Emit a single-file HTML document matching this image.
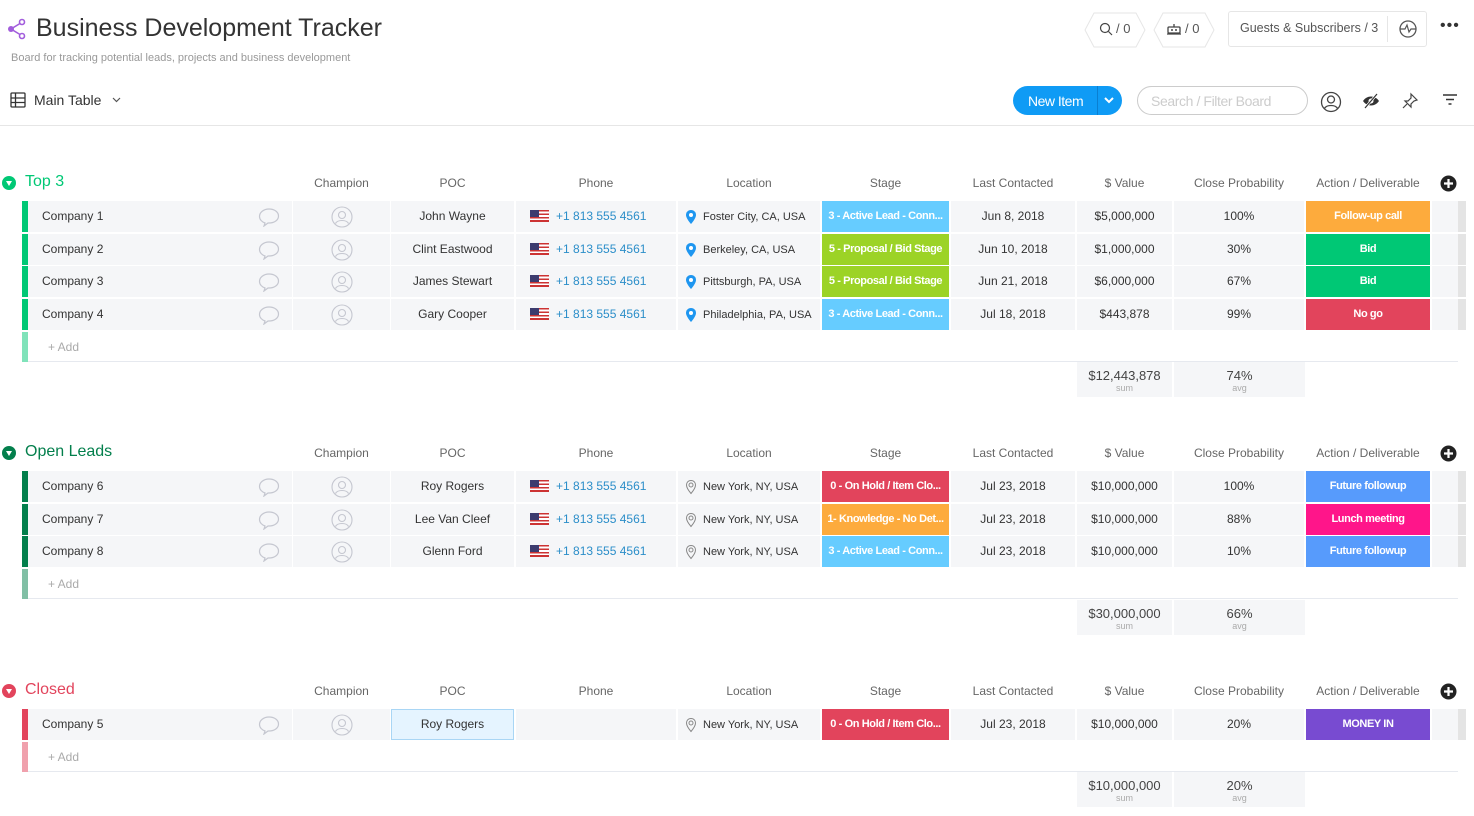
<!DOCTYPE html>
<html><head><meta charset="utf-8"><style>
*{margin:0;padding:0;box-sizing:border-box}
body{width:1474px;height:816px;background:#fff;font-family:"Liberation Sans",sans-serif;color:#333;position:relative;overflow:hidden}
.a{position:absolute}
.r{position:absolute;left:0;width:1474px;height:31px}
.r>div{position:absolute;top:0;height:31px;line-height:31px;font-size:12px;text-align:center;background:#f5f6f8;white-space:nowrap;overflow:hidden}
.bar{left:22px;width:6px}
.nm{left:28px;width:264px;text-align:left!important;padding-left:14px}
.ch{left:293px;width:97px}.poc{left:391px;width:123px}
.ph{left:516px;width:160px;text-align:left!important;padding-left:14px}
.lo{left:678px;width:142px;text-align:left!important;padding-left:7px}
.lo span{font-size:11px}
.st{left:822px;width:127px;color:#fff!important;font-weight:bold;font-size:11px!important;letter-spacing:-0.4px}
.lc{left:951px;width:124px}.va{left:1077px;width:95px}.pr{left:1174px;width:130px}
.ac{left:1306px;width:124px;color:#fff;font-weight:bold;font-size:11px!important;letter-spacing:-0.4px}
.ex{left:1432px;width:26px}.sc{left:1458px;width:8px;background:#e4e4e4!important}
.hd{position:absolute;font-size:12px;color:#666;text-align:center}
.gt{position:absolute;left:25px;font-size:16px}
.circ{position:absolute;left:2px;width:14px;height:14px;border-radius:50%}
.circ:after{content:"";position:absolute;left:3.5px;top:4.5px;border-left:3.5px solid transparent;border-right:3.5px solid transparent;border-top:5px solid #fff}
.flag{display:inline-block;width:19px;height:12px;vertical-align:-2px;margin-right:7px;background:repeating-linear-gradient(#c33 0 1.7px,#fff 1.7px 3.4px);position:relative}
.flag:before{content:"";position:absolute;left:0;top:0;width:9px;height:7px;background:#3c3b6e}
.phn{color:#2b8ec9}
.sum{position:absolute;background:#f5f6f8;text-align:center;font-size:13px;color:#444;line-height:14px;padding-top:7px;height:35px}
.sum span{display:block;font-size:9px;color:#aaa;line-height:10px}
.add{position:absolute;left:22px;width:1436px;height:30px;border-bottom:1px solid #e6e9ef;font-size:12px;color:#aaa;line-height:30px;padding-left:26px}
.add i{position:absolute;left:0;top:0;width:6px;height:30px}
svg{vertical-align:middle}
</style></head><body>

<svg class="a" style="left:7px;top:18px" width="20" height="22" viewBox="0 0 20 22"><g fill="none" stroke="#a25ddc" stroke-width="1.6"><circle cx="15" cy="4" r="2.5"/><circle cx="15" cy="18" r="2.5"/><path d="M13 5.5 L4 11 L13 16.5"/></g><circle cx="4" cy="11" r="3" fill="#a25ddc"/></svg>
<div class="a" style="left:36px;top:14px;font-size:25px;color:#333">Business Development Tracker</div>
<div class="a" style="left:11px;top:52px;font-size:11px;color:#999">Board for tracking potential leads, projects and business development</div>

<svg class="a" style="left:1084px;top:12px" width="62" height="36"><path d="M10 1H52L61 18 52 35H10L1 18Z" fill="#fff" stroke="#e6e6e6"/></svg>
<svg class="a" style="left:1098px;top:21px" width="16" height="16"><g fill="none" stroke="#444" stroke-width="1.2"><circle cx="7" cy="7" r="4.5"/><path d="M10.5 10.5L14 14"/></g></svg>
<div class="a" style="left:1116px;top:21px;font-size:13px;color:#555">/ 0</div>
<svg class="a" style="left:1153px;top:12px" width="62" height="36"><path d="M10 1H52L61 18 52 35H10L1 18Z" fill="#fff" stroke="#e6e6e6"/></svg>
<svg class="a" style="left:1166px;top:22px" width="16" height="14"><g fill="none" stroke="#444" stroke-width="1.3"><rect x="2" y="5" width="12" height="6" rx="1"/><path d="M8 5V2M1 12h14"/></g><circle cx="6" cy="8" r="1" fill="#444"/><circle cx="10" cy="8" r="1" fill="#444"/></svg>
<div class="a" style="left:1185px;top:21px;font-size:13px;color:#555">/ 0</div>
<div class="a" style="left:1228px;top:11px;width:199px;height:36px;border:1px solid #e6e6e6;border-radius:3px"></div>
<div class="a" style="left:1240px;top:21px;font-size:12.5px;color:#555">Guests &amp; Subscribers / 3</div>
<div class="a" style="left:1387px;top:16px;width:1px;height:26px;background:#e6e6e6"></div>
<svg class="a" style="left:1398px;top:19px" width="20" height="20"><circle cx="10" cy="10" r="8" fill="none" stroke="#555" stroke-width="1.3"/><path d="M2 10h5l2-4 2 7 2-3h5" fill="none" stroke="#555" stroke-width="1.2"/></svg>
<div class="a" style="left:1440px;top:17px;font-size:16px;color:#333;letter-spacing:1px">•••</div>

<svg class="a" style="left:10px;top:92px" width="16" height="16"><g fill="none" stroke="#333" stroke-width="1.3"><rect x="1" y="1" width="14" height="14" rx="1"/><path d="M1 6h14M1 10.5h14M5.5 1v14"/></g></svg>
<div class="a" style="left:34px;top:92px;font-size:14px;color:#333">Main Table</div>
<svg class="a" style="left:112px;top:97px" width="9" height="6"><path d="M1 1l3.5 3.5L8 1" fill="none" stroke="#555" stroke-width="1.2"/></svg>

<div class="a" style="left:1013px;top:86px;width:109px;height:29px;border-radius:15px;background:#0f9bf5"></div>
<div class="a" style="left:1028px;top:93px;font-size:14px;color:#fff;letter-spacing:-0.5px">New Item</div>
<div class="a" style="left:1097px;top:86px;width:1px;height:29px;background:#0a7fd1"></div>
<svg class="a" style="left:1104px;top:96px" width="10" height="8"><path d="M1 2l4 4 4-4" fill="none" stroke="#fff" stroke-width="2"/></svg>
<div class="a" style="left:1137px;top:86px;width:171px;height:29px;border:1px solid #ccc;border-radius:15px"></div>
<div class="a" style="left:1151px;top:93px;font-size:14px;color:#ccc;letter-spacing:-0.4px">Search / Filter Board</div>
<svg class="a" style="left:1320px;top:91px" width="22" height="22"><g fill="none" stroke="#444" stroke-width="1.3"><circle cx="11" cy="11" r="9.5"/><circle cx="11" cy="8.5" r="3.5"/><path d="M4.5 17.5c2-4 11-4 13 0"/></g></svg>
<svg class="a" style="left:1362px;top:93px" width="18" height="16"><path d="M1 8c4-6 12-6 16 0c-4 6-12 6-16 0z" fill="#333"/><circle cx="9" cy="8" r="2.5" fill="#fff"/><path d="M3 15L15 1" stroke="#fff" stroke-width="2.5"/><path d="M3 15L15 1" stroke="#333" stroke-width="1.2"/></svg>
<svg class="a" style="left:1401px;top:92px" width="18" height="18"><g fill="none" stroke="#444" stroke-width="1.2"><path d="M10 2l6 6-3 1-3 3 0 3-6-6 3 0 3-3z"/><path d="M6 12l-4 4"/></g></svg>
<svg class="a" style="left:1442px;top:94px" width="16" height="12"><path d="M1 1h14M4 5.5h8M6.5 10h3" stroke="#333" stroke-width="1.6"/></svg>
<div class="a" style="left:0;top:125px;width:1474px;height:1px;background:#e6e6e6"></div>

<!-- Group 1 -->
<div class="circ" style="top:176px;background:#00c875"></div>
<div class="gt" style="top:173px;color:#00c875">Top 3</div>
<div class="hd" style="left:293px;width:97px;top:176px">Champion</div><div class="hd" style="left:391px;width:123px;top:176px">POC</div><div class="hd" style="left:516px;width:160px;top:176px">Phone</div><div class="hd" style="left:678px;width:142px;top:176px">Location</div><div class="hd" style="left:822px;width:127px;top:176px">Stage</div><div class="hd" style="left:951px;width:124px;top:176px">Last Contacted</div><div class="hd" style="left:1077px;width:95px;top:176px">$ Value</div><div class="hd" style="left:1174px;width:130px;top:176px">Close Probability</div><div class="hd" style="left:1306px;width:124px;top:176px">Action / Deliverable</div>
<svg class="a" style="left:1440px;top:175px" width="17" height="17"><circle cx="8.5" cy="8.5" r="8" fill="#222"/><path d="M8.5 4v9M4 8.5h9" stroke="#fff" stroke-width="2.2"/></svg>

<div class="r" style="top:201px"><div class="bar" style="background:#00c875"></div><div class="nm">Company 1<svg style="position:absolute;left:230px;top:6px" width="22" height="20"><path d="M11 2C5.5 2 1.5 5.5 1.5 9.5c0 3 2.5 5.5 5.5 6.5L6 19l4-3h1c5.5 0 9.5-3 9.5-7S16.5 2 11 2z" fill="none" stroke="#c5c7d0" stroke-width="1.2"/></svg></div><div class="ch"><svg width="22" height="22"><g fill="none" stroke="#c5c7d0" stroke-width="1.1"><circle cx="11" cy="11" r="10"/><circle cx="11" cy="9" r="3.5"/><path d="M4.5 17.5c2-4 11-4 13 0"/></g></svg></div><div class="poc">John Wayne</div><div class="ph"><span class="flag"></span><span class="phn">+1 813 555 4561</span></div><div class="lo"><svg width="12" height="16" style="margin-right:6px"><path d="M6 1C3 1 1 3.2 1 6c0 3.5 5 9 5 9s5-5.5 5-9C11 3.2 9 1 6 1z" fill="#1e96f0"/><circle cx="6" cy="6" r="2" fill="#fff"/></svg><span>Foster City, CA, USA</span></div><div class="st" style="background:#66ccff">3 - Active Lead - Conn...</div><div class="lc">Jun 8, 2018</div><div class="va">$5,000,000</div><div class="pr">100%</div><div class="ac" style="background:#fdab3d">Follow-up call</div><div class="ex"></div><div class="sc"></div></div>
<div class="r" style="top:234px"><div class="bar" style="background:#00c875"></div><div class="nm">Company 2<svg style="position:absolute;left:230px;top:6px" width="22" height="20"><path d="M11 2C5.5 2 1.5 5.5 1.5 9.5c0 3 2.5 5.5 5.5 6.5L6 19l4-3h1c5.5 0 9.5-3 9.5-7S16.5 2 11 2z" fill="none" stroke="#c5c7d0" stroke-width="1.2"/></svg></div><div class="ch"><svg width="22" height="22"><g fill="none" stroke="#c5c7d0" stroke-width="1.1"><circle cx="11" cy="11" r="10"/><circle cx="11" cy="9" r="3.5"/><path d="M4.5 17.5c2-4 11-4 13 0"/></g></svg></div><div class="poc">Clint Eastwood</div><div class="ph"><span class="flag"></span><span class="phn">+1 813 555 4561</span></div><div class="lo"><svg width="12" height="16" style="margin-right:6px"><path d="M6 1C3 1 1 3.2 1 6c0 3.5 5 9 5 9s5-5.5 5-9C11 3.2 9 1 6 1z" fill="#1e96f0"/><circle cx="6" cy="6" r="2" fill="#fff"/></svg><span>Berkeley, CA, USA</span></div><div class="st" style="background:#9cd326">5 - Proposal / Bid Stage</div><div class="lc">Jun 10, 2018</div><div class="va">$1,000,000</div><div class="pr">30%</div><div class="ac" style="background:#00c875">Bid</div><div class="ex"></div><div class="sc"></div></div>
<div class="r" style="top:266px"><div class="bar" style="background:#00c875"></div><div class="nm">Company 3<svg style="position:absolute;left:230px;top:6px" width="22" height="20"><path d="M11 2C5.5 2 1.5 5.5 1.5 9.5c0 3 2.5 5.5 5.5 6.5L6 19l4-3h1c5.5 0 9.5-3 9.5-7S16.5 2 11 2z" fill="none" stroke="#c5c7d0" stroke-width="1.2"/></svg></div><div class="ch"><svg width="22" height="22"><g fill="none" stroke="#c5c7d0" stroke-width="1.1"><circle cx="11" cy="11" r="10"/><circle cx="11" cy="9" r="3.5"/><path d="M4.5 17.5c2-4 11-4 13 0"/></g></svg></div><div class="poc">James Stewart</div><div class="ph"><span class="flag"></span><span class="phn">+1 813 555 4561</span></div><div class="lo"><svg width="12" height="16" style="margin-right:6px"><path d="M6 1C3 1 1 3.2 1 6c0 3.5 5 9 5 9s5-5.5 5-9C11 3.2 9 1 6 1z" fill="#1e96f0"/><circle cx="6" cy="6" r="2" fill="#fff"/></svg><span>Pittsburgh, PA, USA</span></div><div class="st" style="background:#9cd326">5 - Proposal / Bid Stage</div><div class="lc">Jun 21, 2018</div><div class="va">$6,000,000</div><div class="pr">67%</div><div class="ac" style="background:#00c875">Bid</div><div class="ex"></div><div class="sc"></div></div>
<div class="r" style="top:299px"><div class="bar" style="background:#00c875"></div><div class="nm">Company 4<svg style="position:absolute;left:230px;top:6px" width="22" height="20"><path d="M11 2C5.5 2 1.5 5.5 1.5 9.5c0 3 2.5 5.5 5.5 6.5L6 19l4-3h1c5.5 0 9.5-3 9.5-7S16.5 2 11 2z" fill="none" stroke="#c5c7d0" stroke-width="1.2"/></svg></div><div class="ch"><svg width="22" height="22"><g fill="none" stroke="#c5c7d0" stroke-width="1.1"><circle cx="11" cy="11" r="10"/><circle cx="11" cy="9" r="3.5"/><path d="M4.5 17.5c2-4 11-4 13 0"/></g></svg></div><div class="poc">Gary Cooper</div><div class="ph"><span class="flag"></span><span class="phn">+1 813 555 4561</span></div><div class="lo"><svg width="12" height="16" style="margin-right:6px"><path d="M6 1C3 1 1 3.2 1 6c0 3.5 5 9 5 9s5-5.5 5-9C11 3.2 9 1 6 1z" fill="#1e96f0"/><circle cx="6" cy="6" r="2" fill="#fff"/></svg><span>Philadelphia, PA, USA</span></div><div class="st" style="background:#66ccff">3 - Active Lead - Conn...</div><div class="lc">Jul 18, 2018</div><div class="va">$443,878</div><div class="pr">99%</div><div class="ac" style="background:#e2445c">No go</div><div class="ex"></div><div class="sc"></div></div>
<div class="add" style="top:332px"><i style="background:#80e3ba"></i>+ Add</div>
<div class="sum" style="left:1077px;top:362px;width:95px">$12,443,878<span>sum</span></div>
<div class="sum" style="left:1174px;top:362px;width:131px">74%<span>avg</span></div>

<!-- Group 2 -->
<div class="circ" style="top:446px;background:#037f4c"></div>
<div class="gt" style="top:443px;color:#037f4c">Open Leads</div>
<div class="hd" style="left:293px;width:97px;top:446px">Champion</div><div class="hd" style="left:391px;width:123px;top:446px">POC</div><div class="hd" style="left:516px;width:160px;top:446px">Phone</div><div class="hd" style="left:678px;width:142px;top:446px">Location</div><div class="hd" style="left:822px;width:127px;top:446px">Stage</div><div class="hd" style="left:951px;width:124px;top:446px">Last Contacted</div><div class="hd" style="left:1077px;width:95px;top:446px">$ Value</div><div class="hd" style="left:1174px;width:130px;top:446px">Close Probability</div><div class="hd" style="left:1306px;width:124px;top:446px">Action / Deliverable</div>
<svg class="a" style="left:1440px;top:445px" width="17" height="17"><circle cx="8.5" cy="8.5" r="8" fill="#222"/><path d="M8.5 4v9M4 8.5h9" stroke="#fff" stroke-width="2.2"/></svg>

<div class="r" style="top:471px"><div class="bar" style="background:#037f4c"></div><div class="nm">Company 6<svg style="position:absolute;left:230px;top:6px" width="22" height="20"><path d="M11 2C5.5 2 1.5 5.5 1.5 9.5c0 3 2.5 5.5 5.5 6.5L6 19l4-3h1c5.5 0 9.5-3 9.5-7S16.5 2 11 2z" fill="none" stroke="#c5c7d0" stroke-width="1.2"/></svg></div><div class="ch"><svg width="22" height="22"><g fill="none" stroke="#c5c7d0" stroke-width="1.1"><circle cx="11" cy="11" r="10"/><circle cx="11" cy="9" r="3.5"/><path d="M4.5 17.5c2-4 11-4 13 0"/></g></svg></div><div class="poc">Roy Rogers</div><div class="ph"><span class="flag"></span><span class="phn">+1 813 555 4561</span></div><div class="lo"><svg width="12" height="16" style="margin-right:6px"><path d="M6 1.5C3.2 1.5 1.5 3.5 1.5 6c0 3.2 4.5 8.5 4.5 8.5s4.5-5.3 4.5-8.5c0-2.5-1.7-4.5-4.5-4.5z" fill="none" stroke="#888" stroke-width="1"/><circle cx="6" cy="6" r="2" fill="none" stroke="#888"/></svg><span>New York, NY, USA</span></div><div class="st" style="background:#e2445c">0 - On Hold / Item Clo...</div><div class="lc">Jul 23, 2018</div><div class="va">$10,000,000</div><div class="pr">100%</div><div class="ac" style="background:#579bfc">Future followup</div><div class="ex"></div><div class="sc"></div></div>
<div class="r" style="top:504px"><div class="bar" style="background:#037f4c"></div><div class="nm">Company 7<svg style="position:absolute;left:230px;top:6px" width="22" height="20"><path d="M11 2C5.5 2 1.5 5.5 1.5 9.5c0 3 2.5 5.5 5.5 6.5L6 19l4-3h1c5.5 0 9.5-3 9.5-7S16.5 2 11 2z" fill="none" stroke="#c5c7d0" stroke-width="1.2"/></svg></div><div class="ch"><svg width="22" height="22"><g fill="none" stroke="#c5c7d0" stroke-width="1.1"><circle cx="11" cy="11" r="10"/><circle cx="11" cy="9" r="3.5"/><path d="M4.5 17.5c2-4 11-4 13 0"/></g></svg></div><div class="poc">Lee Van Cleef</div><div class="ph"><span class="flag"></span><span class="phn">+1 813 555 4561</span></div><div class="lo"><svg width="12" height="16" style="margin-right:6px"><path d="M6 1.5C3.2 1.5 1.5 3.5 1.5 6c0 3.2 4.5 8.5 4.5 8.5s4.5-5.3 4.5-8.5c0-2.5-1.7-4.5-4.5-4.5z" fill="none" stroke="#888" stroke-width="1"/><circle cx="6" cy="6" r="2" fill="none" stroke="#888"/></svg><span>New York, NY, USA</span></div><div class="st" style="background:#fdab3d">1- Knowledge - No Det...</div><div class="lc">Jul 23, 2018</div><div class="va">$10,000,000</div><div class="pr">88%</div><div class="ac" style="background:#ff158a">Lunch meeting</div><div class="ex"></div><div class="sc"></div></div>
<div class="r" style="top:536px"><div class="bar" style="background:#037f4c"></div><div class="nm">Company 8<svg style="position:absolute;left:230px;top:6px" width="22" height="20"><path d="M11 2C5.5 2 1.5 5.5 1.5 9.5c0 3 2.5 5.5 5.5 6.5L6 19l4-3h1c5.5 0 9.5-3 9.5-7S16.5 2 11 2z" fill="none" stroke="#c5c7d0" stroke-width="1.2"/></svg></div><div class="ch"><svg width="22" height="22"><g fill="none" stroke="#c5c7d0" stroke-width="1.1"><circle cx="11" cy="11" r="10"/><circle cx="11" cy="9" r="3.5"/><path d="M4.5 17.5c2-4 11-4 13 0"/></g></svg></div><div class="poc">Glenn Ford</div><div class="ph"><span class="flag"></span><span class="phn">+1 813 555 4561</span></div><div class="lo"><svg width="12" height="16" style="margin-right:6px"><path d="M6 1.5C3.2 1.5 1.5 3.5 1.5 6c0 3.2 4.5 8.5 4.5 8.5s4.5-5.3 4.5-8.5c0-2.5-1.7-4.5-4.5-4.5z" fill="none" stroke="#888" stroke-width="1"/><circle cx="6" cy="6" r="2" fill="none" stroke="#888"/></svg><span>New York, NY, USA</span></div><div class="st" style="background:#66ccff">3 - Active Lead - Conn...</div><div class="lc">Jul 23, 2018</div><div class="va">$10,000,000</div><div class="pr">10%</div><div class="ac" style="background:#579bfc">Future followup</div><div class="ex"></div><div class="sc"></div></div>
<div class="add" style="top:569px"><i style="background:#81bfa5"></i>+ Add</div>
<div class="sum" style="left:1077px;top:600px;width:95px">$30,000,000<span>sum</span></div>
<div class="sum" style="left:1174px;top:600px;width:131px">66%<span>avg</span></div>

<!-- Group 3 -->
<div class="circ" style="top:684px;background:#e2445c"></div>
<div class="gt" style="top:681px;color:#e2445c">Closed</div>
<div class="hd" style="left:293px;width:97px;top:684px">Champion</div><div class="hd" style="left:391px;width:123px;top:684px">POC</div><div class="hd" style="left:516px;width:160px;top:684px">Phone</div><div class="hd" style="left:678px;width:142px;top:684px">Location</div><div class="hd" style="left:822px;width:127px;top:684px">Stage</div><div class="hd" style="left:951px;width:124px;top:684px">Last Contacted</div><div class="hd" style="left:1077px;width:95px;top:684px">$ Value</div><div class="hd" style="left:1174px;width:130px;top:684px">Close Probability</div><div class="hd" style="left:1306px;width:124px;top:684px">Action / Deliverable</div>
<svg class="a" style="left:1440px;top:683px" width="17" height="17"><circle cx="8.5" cy="8.5" r="8" fill="#222"/><path d="M8.5 4v9M4 8.5h9" stroke="#fff" stroke-width="2.2"/></svg>

<div class="r" style="top:709px"><div class="bar" style="background:#e2445c"></div><div class="nm">Company 5<svg style="position:absolute;left:230px;top:6px" width="22" height="20"><path d="M11 2C5.5 2 1.5 5.5 1.5 9.5c0 3 2.5 5.5 5.5 6.5L6 19l4-3h1c5.5 0 9.5-3 9.5-7S16.5 2 11 2z" fill="none" stroke="#c5c7d0" stroke-width="1.2"/></svg></div><div class="ch"><svg width="22" height="22"><g fill="none" stroke="#c5c7d0" stroke-width="1.1"><circle cx="11" cy="11" r="10"/><circle cx="11" cy="9" r="3.5"/><path d="M4.5 17.5c2-4 11-4 13 0"/></g></svg></div><div class="poc" style="background:#e5f4ff;border:1px solid #a9d6f5;line-height:29px">Roy Rogers</div><div class="ph"></div><div class="lo"><svg width="12" height="16" style="margin-right:6px"><path d="M6 1.5C3.2 1.5 1.5 3.5 1.5 6c0 3.2 4.5 8.5 4.5 8.5s4.5-5.3 4.5-8.5c0-2.5-1.7-4.5-4.5-4.5z" fill="none" stroke="#888" stroke-width="1"/><circle cx="6" cy="6" r="2" fill="none" stroke="#888"/></svg><span>New York, NY, USA</span></div><div class="st" style="background:#e2445c">0 - On Hold / Item Clo...</div><div class="lc">Jul 23, 2018</div><div class="va">$10,000,000</div><div class="pr">20%</div><div class="ac" style="background:#784bd1">MONEY IN</div><div class="ex"></div><div class="sc"></div></div>
<div class="add" style="top:742px"><i style="background:#f0a1ad"></i>+ Add</div>
<div class="sum" style="left:1077px;top:772px;width:95px">$10,000,000<span>sum</span></div>
<div class="sum" style="left:1174px;top:772px;width:131px">20%<span>avg</span></div>
</body></html>
